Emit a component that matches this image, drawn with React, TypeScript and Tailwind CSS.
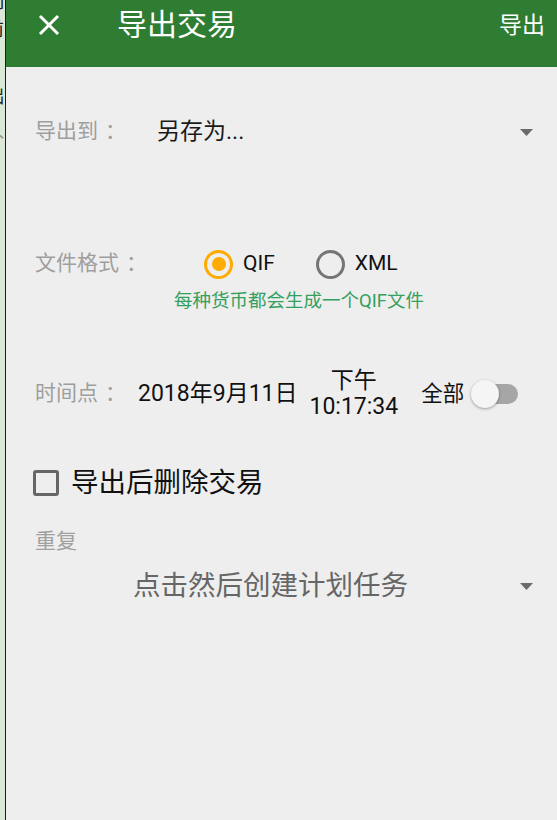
import React from "react";

const font = { fontFamily: 'Roboto, "Noto Sans CJK SC", sans-serif' };

function Caret() {
  return (
    <svg width="13" height="7" viewBox="0 0 13 7" className="shrink-0">
      <path d="M0 0h13L6.5 7z" fill="#6b6b6b" />
    </svg>
  );
}

function Radio({ checked }: { checked?: boolean }) {
  return (
    <span
      className={`flex h-[29px] w-[29px] shrink-0 items-center justify-center rounded-full border-[3px] ${
        checked ? "border-[#ffab00]" : "border-[#757575]"
      }`}
    >
      {checked && <span className="h-[14px] w-[14px] rounded-full bg-[#ffab00]" />}
    </span>
  );
}

function Label({ text, width }: { text: string; width: string }) {
  return (
    <span className={`${width} shrink-0 text-[21px] text-[#9e9e9e]`}>
      {text}
      <span className="pl-[7px]">：</span>
    </span>
  );
}

export default function App() {
  return (
    <div lang="zh-CN" className="flex h-[820px] w-[557px] overflow-hidden bg-[#eeeeee]" style={font}>
      {/* sliver of the screen behind */}
      <div className="relative w-[5px] shrink-0 overflow-hidden bg-[#dbe8d6]">
        <span className="absolute left-[-14px] top-[-12px] text-[19px] text-[#222]">前</span>
        <span className="absolute left-[-15px] top-[16px] text-[19px] text-[#222]">前</span>
        <span className="absolute left-[-15px] top-[83px] text-[19px] text-[#222]">础</span>
        <span className="absolute left-[-15px] top-[124px] text-[19px] text-[#888]">补</span>
      </div>
      <div className="w-[1px] shrink-0 bg-[#1c1c1c]" />

      <div className="flex min-w-0 flex-1 flex-col">
        {/* toolbar */}
        <div className="h-[67px] shrink-0 bg-[#2e7d32]">
          <div className="flex h-[50px] items-center text-white">
            <svg width="22" height="22" viewBox="0 0 22 22" className="ml-[32px]">
              <path d="M2 2l18 18M20 2L2 20" stroke="#fff" strokeWidth="3" />
            </svg>
            <span className="ml-[57px] text-[30px] leading-none">导出交易</span>
            <span className="ml-auto mr-[12px] text-[23px] leading-none">导出</span>
          </div>
        </div>

        <div className="flex flex-col pl-[29px] pr-[24px]">
          {/* export target */}
          <div className="mt-[43px] flex h-[44px] items-center">
            <Label text="导出到" width="w-[122px]" />
            <span className="text-[23px] text-[#1a1a1a]">另存为...</span>
            <span className="ml-auto">
              <Caret />
            </span>
          </div>

          {/* format */}
          <div className="mt-[88px] flex h-[44px] items-center">
            <Label text="文件格式" width="w-[169px]" />
            <Radio checked />
            <span className="ml-[10px] text-[21px] text-[#111]">QIF</span>
            <span className="ml-[41px]">
              <Radio />
            </span>
            <span className="ml-[10px] text-[21px] text-[#111]">XML</span>
          </div>
          <div className="ml-[139px] mt-[3px] h-[24px] text-[18.5px] leading-[24px] text-[#34a060]">
            每种货币都会生成一个QIF文件
          </div>

          {/* point in time */}
          <div className="mt-[55px] flex h-[52px] items-center">
            <Label text="时间点" width="w-[103px]" />
            <span className="text-[23px] text-[#111]">2018年9月11日</span>
            <span className="ml-[12px] flex flex-col items-center text-[23px] leading-[26px] text-[#111]">
              <span>下午</span>
              <span>10:17:34</span>
            </span>
            <span className="ml-[23px] text-[21.5px] text-[#111]">全部</span>
            <span className="relative ml-[7px] flex h-[28px] w-[48px] items-center">
              <span className="absolute left-[13px] h-[20px] w-[34px] rounded-full bg-[#a6a6a6]" />
              <span className="relative h-[28px] w-[28px] rounded-full bg-[#f5f5f5] shadow-[0_1px_3px_rgba(0,0,0,0.35)]" />
            </span>
          </div>

          {/* delete after export */}
          <div className="mt-[43px] flex h-[40px] items-center">
            <span className="ml-[-2px] h-[26px] w-[26px] rounded-[3px] border-[3px] border-[#666]" />
            <span className="ml-[12px] text-[27.5px] text-[#111]">导出后删除交易</span>
          </div>

          {/* recurrence */}
          <div className="mt-[25px] h-[26px] text-[21px] leading-[26px] text-[#a0a0a0]">重复</div>
          <div className="mt-[12px] flex h-[40px] items-center">
            <span className="ml-[98px] text-[27.5px] text-[#666]">点击然后创建计划任务</span>
            <span className="ml-auto">
              <Caret />
            </span>
          </div>
        </div>
      </div>
    </div>
  );
}
